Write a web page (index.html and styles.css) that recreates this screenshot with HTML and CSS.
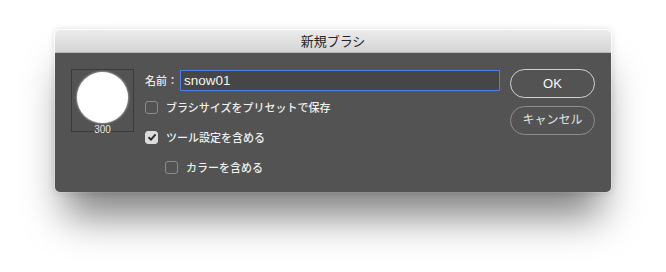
FILE: index.html
```html
<!DOCTYPE html>
<html lang="ja">
<head>
  <meta charset="UTF-8"/>
  <title>新規ブラシ</title>
  <link rel="stylesheet" href="styles.css">
</head>
<body>

  <div class="dialog">
    <div class="titlebar">新規ブラシ</div>

    <div class="dialog-body">
      <!-- Brush preview -->
      <div class="preview">
        <div class="tip"></div>
        <div class="tip-size">300</div>
      </div>

      <!-- Fields -->
      <div class="fields">
        <div class="name-row">
          <span class="name-label">名前：</span>
          <div class="name-input">snow01</div>
        </div>
        <div class="check-row">
          <span class="box"></span>
          <span>ブラシサイズをプリセットで保存</span>
        </div>
        <div class="check-row">
          <span class="box checked">
            <svg width="10" height="10" viewBox="0 0 10 10"><path d="M1.5 5.2 L4 7.6 L8.6 2.4" fill="none" stroke="#2b2b2b" stroke-width="1.9"/></svg>
          </span>
          <span>ツール設定を含める</span>
        </div>
        <div class="check-row sub">
          <span class="box"></span>
          <span>カラーを含める</span>
        </div>
      </div>

      <!-- Buttons -->
      <div class="buttons">
        <div class="btn primary">OK</div>
        <div class="btn">キャンセル</div>
      </div>
    </div>
  </div>

</body>
</html>
```

FILE: styles.css
```css
html { background: #fff; }
body {
  margin: 0;
  font-family: "Liberation Sans", "Noto Sans CJK JP", sans-serif;
  padding: 30px 0 0 55px;
  height: 272px;
  box-sizing: border-box;
}

.dialog {
  width: 556px;
  position: relative;
  z-index: 0;
}
/* soft drop shadow under the window */
.dialog::before {
  content: "";
  position: absolute;
  left: 10px;
  right: 10px;
  top: 40px;
  bottom: -24px;
  background: rgba(0,0,0,0.5);
  filter: blur(20px);
  z-index: -1;
}
.dialog::after {
  content: "";
  position: absolute;
  inset: -1px;
  border-radius: 6px;
  box-shadow: 0 0 6px rgba(0,0,0,0.12);
  z-index: -1;
}

.titlebar {
  height: 23px;
  line-height: 23px;
  text-align: center;
  font-size: 13px;
  color: #262626;
  background: linear-gradient(#ececec, #d4d4d4);
  border-bottom: 1px solid #b8b8b8;
  border-radius: 5px 5px 0 0;
  box-sizing: border-box;
}

.dialog-body {
  background: #535353;
  height: 139px;
  display: flex;
  padding: 16px 16px 0 16px;
  border-radius: 0 0 5px 5px;
  box-sizing: border-box;
}

.preview {
  width: 63px;
  height: 63px;
  box-sizing: border-box;
  border: 1px solid #3a3a3a;
}
.tip {
  width: 51px;
  height: 51px;
  border-radius: 50%;
  background: #fff;
  box-shadow: 0 0 2px 0.5px rgba(255,255,255,0.6);
  margin: 2px 0 0 5px;
}
.tip-size {
  text-align: center;
  font-size: 10px;
  color: #e6e6e6;
  line-height: 10px;
  margin-top: 2px;
}

.fields {
  margin-left: 11px;
  width: 355px;
}

.name-row {
  display: flex;
  align-items: center;
  height: 22px;
}
.name-label {
  flex-shrink: 0;
  white-space: nowrap;
  font-size: 11px;
  font-weight: 500;
  color: #e8e8e8;
  width: 35px;
}
.name-input {
  flex: 1;
  height: 21px;
  box-sizing: border-box;
  border: 1px solid #4c7fe6;
  background: #464646;
  color: #f4f4f4;
  font-size: 13.5px;
  line-height: 19px;
  padding-left: 3px;
}

.check-row {
  display: flex;
  align-items: center;
  height: 30px;
  font-size: 11px;
  font-weight: 500;
  color: #f0f0f0;
}
.check-row:nth-child(2) { margin-top: 1px; }
.check-row.sub { padding-left: 20px; }

.box {
  width: 13px;
  height: 13px;
  box-sizing: border-box;
  border: 1px solid #8c8c8c;
  border-radius: 3px;
  margin-right: 8px;
  display: flex;
  align-items: center;
  justify-content: center;
}
.box.checked {
  background: #dcdcdc;
  border-color: #dcdcdc;
}

.buttons {
  margin-left: 10px;
  display: flex;
  flex-direction: column;
  gap: 8px;
}
.btn {
  width: 85px;
  height: 29px;
  box-sizing: border-box;
  border: 1px solid #8f8f8f;
  border-radius: 15px;
  text-align: center;
  line-height: 27px;
  font-size: 12px;
  color: #e0e0e0;
}
.btn.primary {
  border-color: #d2d2d2;
  color: #fafafa;
  font-size: 13px;
}
```
